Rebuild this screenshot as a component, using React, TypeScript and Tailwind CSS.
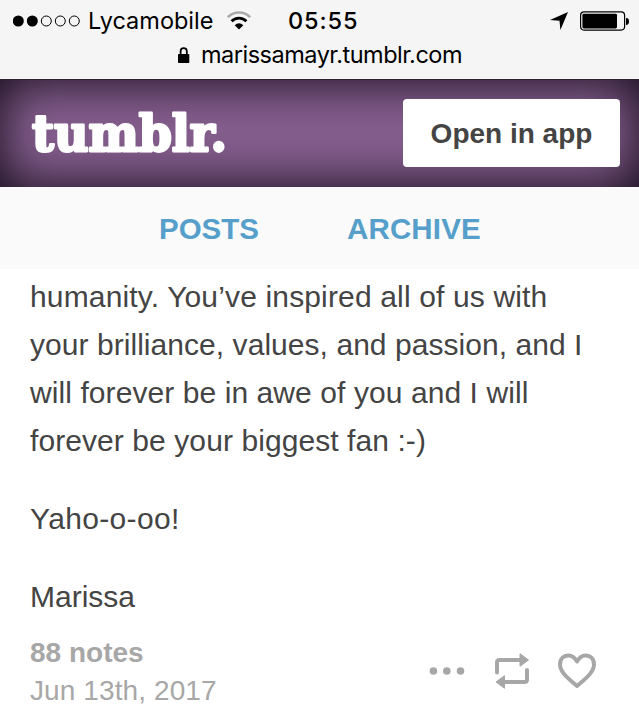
const paragraph = [
  { text: 'humanity. You’ve inspired all of us with', tracking: 'tracking-[0.15px]' },
  { text: 'your brilliance, values, and passion, and I', tracking: 'tracking-[0.05px]' },
  { text: 'will forever be in awe of you and I will', tracking: 'tracking-[0.08px]' },
  { text: 'forever be your biggest fan :-)', tracking: 'tracking-[0.08px]' },
];

function StatusBar() {
  return (
    <div className="h-[79px] bg-[#f5f5f6] text-black font-['Inter','Liberation_Sans',sans-serif]">
      <div className="flex h-[41px] items-center pl-[13px] pr-[9px]">
        <svg width="68" height="14" viewBox="0 0 68 14" fill="none" stroke="#000">
          <circle cx="5.3" cy="7" r="5.5" fill="#000" stroke="none" />
          <circle cx="19.3" cy="7" r="5.5" fill="#000" stroke="none" />
          <circle cx="33.3" cy="7" r="5" />
          <circle cx="47.3" cy="7" r="5" />
          <circle cx="61.3" cy="7" r="5" />
        </svg>
        <span className="ml-[7px] w-[126px] text-[23.5px] whitespace-nowrap">Lycamobile</span>
        <svg className="ml-[13px]" width="24" height="20" viewBox="0 0 24 20" fill="none">
          <path d="M.8 6.2A15.7 15.7 0 0 1 23.2 6.2" stroke="#aaa" strokeWidth="2.600" />
          <path d="M4.6 10.2A10.4 10.4 0 0 1 19.4 10.2" stroke="#000" strokeWidth="2.800" />
          <path d="M12 18.500 7.700 14.200Q12 10.300 16.300 14.200Z" fill="#000" />
        </svg>
        <span className="ml-[37px] text-[23.5px] font-medium tracking-[0.9px] whitespace-nowrap">05:55</span>
        <svg className="ml-auto" width="18" height="18" viewBox="0 0 18 18">
          <path d="M18 0 0 8l9.5.7L10.4 18Z" fill="#000" />
        </svg>
        <svg className="ml-3" width="50" height="20" viewBox="0 0 50 20">
          <rect x=".6" y=".9" width="44" height="18.2" rx="3.5" fill="none" stroke="#000" strokeWidth="1.2" />
          <rect x="2.4" y="2.8" width="34.6" height="14.6" rx="1.4" />
          <path d="M46 7q3 0 3 3.4T46 14Z" />
        </svg>
      </div>
      <div className="flex h-7 items-center pl-[178px]">
        <svg width="12" height="16" viewBox="0 0 12 16">
          <path d="M2.600 8V4.300a3.100 3.100 0 0 1 6.200 0V8" fill="none" stroke="#000" strokeWidth="1.8" />
          <rect x="0" y="7" width="11.3" height="9" rx=".8" />
        </svg>
        <span className="ml-[11px] text-[23.5px] tracking-[-0.5px] whitespace-nowrap">marissamayr.tumblr.com</span>
      </div>
    </div>
  );
}

function Header() {
  return (
    <header className="flex h-[108px] items-center justify-between border-t border-[#2f2036] bg-[#865f8f] pr-[19px] pb-[2px] pl-8 shadow-[inset_0_0_52px_#0d0612]">
      <svg width="198" height="50" viewBox="0 0 198 50" className="overflow-visible">
        <text
          x="0"
          y="42.5"
          textLength="195"
          lengthAdjust="spacingAndGlyphs"
          strokeLinejoin="round"
          className="fill-white stroke-white stroke-[2.8px] font-['DejaVu_Serif',serif] text-[50px] font-bold"
        >
          tumblr.
        </text>
      </svg>
      <button className="h-[68px] w-[217px] rounded-[4px] bg-white pt-0.5 text-[28px] font-bold text-[#444]">
        Open in app
      </button>
    </header>
  );
}

function Actions() {
  return (
    <div className="flex items-center text-[#a7a7a7]">
      <svg width="36" height="8" viewBox="0 0 36 8" fill="currentColor">
        <circle cx="4.4" cy="4" r="3.8" />
        <circle cx="17.8" cy="4" r="3.8" />
        <circle cx="31.5" cy="4" r="3.8" />
      </svg>
      <svg className="ml-[30px]" width="34" height="36" viewBox="0 0 34 36" fill="none" stroke="currentColor" strokeWidth="4" strokeLinejoin="round">
        <path d="M2 19.500V9.500Q2 7 4.500 7H25" strokeLinecap="round" />
        <path d="M32 17v9.500q0 2.500-2.500 2.500H9" strokeLinecap="round" />
        <path d="M25 .700 33.500 7l-8.500 6.300Z" fill="currentColor" strokeWidth="1" />
        <path d="M9.500 22.700 1 29l8.500 6.300Z" fill="currentColor" strokeWidth="1" />
      </svg>
      <svg className="ml-7" width="40" height="36" viewBox="0 0 40 36" fill="none" stroke="currentColor" strokeWidth="4" strokeLinejoin="round">
        <path d="M20 33C11 25.500 3 19 3 11.500 3 6 6.500 2.500 11.500 2.500c3.500 0 6.500 2.500 8.500 6 2-3.500 5-6 8.500-6 5 0 8.500 3.500 8.500 9C37 19 29 25.500 20 33Z" />
      </svg>
    </div>
  );
}

export default function App() {
  return (
    <div className="h-[727px] w-[639px] overflow-hidden bg-white font-['Liberation_Sans',Arial,sans-serif] text-[#444]">
      <StatusBar />
      <Header />
      <nav className="flex h-[82px] items-center bg-[#fafafa] pt-[3px] pl-[159px] text-[29.5px] font-bold text-[#569fcb]">
        <a className="w-[188px]">POSTS</a>
        <a className="tracking-[0.15px]">ARCHIVE</a>
      </nav>
      <main className="px-[30px] pt-[4px] text-[30px] leading-[48px]">
        <p>
          {paragraph.map((line) => (
            <span key={line.text} className={`block whitespace-nowrap ${line.tracking}`}>
              {line.text}
            </span>
          ))}
        </p>
        <p className="mt-[30px] tracking-[0.35px]">Yaho-o-oo!</p>
        <p className="mt-[30px]">Marissa</p>
      </main>
      <footer className="flex items-start justify-between pt-[13px] pr-[42px] pl-[30px] text-[28px] leading-[38px] text-[#a7a7a7]">
        <div className="whitespace-nowrap">
          <div className="font-bold">88 notes</div>
          <div className="tracking-[0.1px]">Jun 13th, 2017</div>
        </div>
        <div className="pt-[19px]">
          <Actions />
        </div>
      </footer>
    </div>
  );
}
